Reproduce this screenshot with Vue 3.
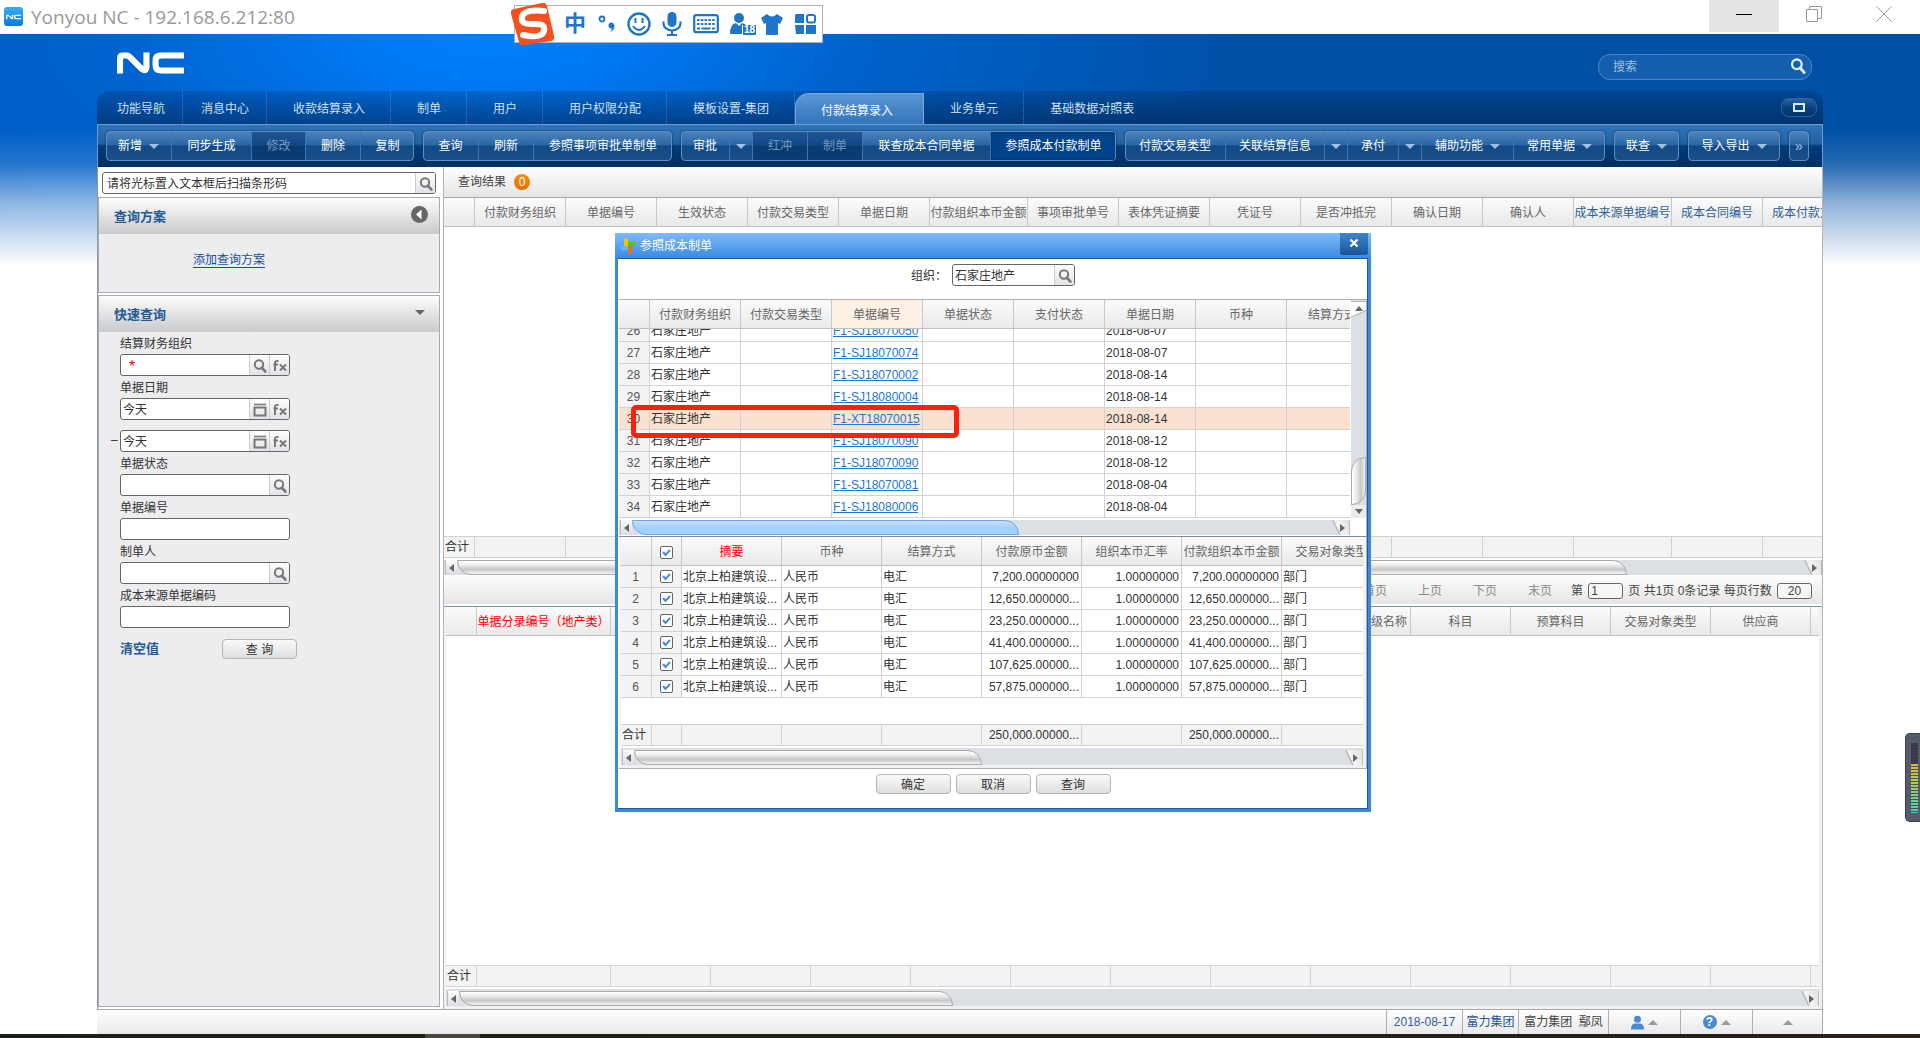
<script setup>
import { ref } from 'vue'

const tabs = ref([
  { label: '功能导航', home: true },
  { label: '消息中心', home: true },
  { label: '收款结算录入' },
  { label: '制单' },
  { label: '用户' },
  { label: '用户权限分配' },
  { label: '模板设置-集团' },
  { label: '付款结算录入', active: true },
  { label: '业务单元' },
  { label: '基础数据对照表' },
])

const toolGroups = [
  [
    { label: '新增', w: 66, caret: true },
    { label: '同步生成', w: 80 },
    { label: '修改', w: 54, off: true },
    { label: '删除', w: 55 },
    { label: '复制', w: 53 },
  ],
  [
    { label: '查询', w: 56 },
    { label: '刷新', w: 55 },
    { label: '参照事项审批单制单', w: 138 },
  ],
  [
    { label: '审批', w: 49 },
    { label: '', w: 23, caret: true },
    { label: '红冲', w: 55, off: true },
    { label: '制单', w: 55, off: true },
    { label: '联查成本合同单据', w: 128 },
    { label: '参照成本付款制单', w: 125, on: true },
  ],
  [
    { label: '付款交易类型', w: 101 },
    { label: '关联结算信息', w: 99 },
    { label: '', w: 23, caret: true },
    { label: '承付', w: 51 },
    { label: '', w: 23, caret: true },
    { label: '辅助功能', w: 92, caret: true },
    { label: '常用单据', w: 91, caret: true },
  ],
  [{ label: '联查', w: 65, caret: true }],
  [{ label: '导入导出', w: 92, caret: true }],
]

const resultCols = [
  { t: '', w: 31 },
  { t: '付款财务组织', w: 91 },
  { t: '单据编号', w: 91 },
  { t: '生效状态', w: 91 },
  { t: '付款交易类型', w: 91 },
  { t: '单据日期', w: 91 },
  { t: '付款组织本币金额', w: 98 },
  { t: '事项审批单号', w: 91 },
  { t: '表体凭证摘要', w: 91 },
  { t: '凭证号', w: 91 },
  { t: '是否冲抵完', w: 91 },
  { t: '确认日期', w: 91 },
  { t: '确认人', w: 91 },
  { t: '成本来源单据编号', w: 98, c: 'blue' },
  { t: '成本合同编号', w: 91, c: 'blue' },
  { t: '成本付款方式', w: 91, c: 'blue' },
]

const entryCols = [
  { t: '', w: 31 },
  { t: '单据分录编号（地产类）', w: 134, c: 'red' },
  { t: '', w: 100 },
  { t: '', w: 100 },
  { t: '', w: 100 },
  { t: '', w: 100 },
  { t: '', w: 100 },
  { t: '', w: 100 },
  { t: '', w: 100 },
  { t: '级名称', w: 100, c: 'end' },
  { t: '科目', w: 100 },
  { t: '预算科目', w: 100 },
  { t: '交易对象类型', w: 100 },
  { t: '供应商', w: 100 },
  { t: '', w: 100 },
]

const billCols = [
  { t: '', w: 31 },
  { t: '付款财务组织', w: 91 },
  { t: '付款交易类型', w: 91 },
  { t: '单据编号', w: 91, c: 'sorted' },
  { t: '单据状态', w: 91 },
  { t: '支付状态', w: 91 },
  { t: '单据日期', w: 91 },
  { t: '币种', w: 91 },
  { t: '结算方式', w: 91 },
]

const bills = [
  [26, 'F1-SJ18070050', '2018-08-07'],
  [27, 'F1-SJ18070074', '2018-08-07'],
  [28, 'F1-SJ18070002', '2018-08-14'],
  [29, 'F1-SJ18080004', '2018-08-14'],
  [30, 'F1-XT18070015', '2018-08-14'],
  [31, 'F1-SJ18070090', '2018-08-12'],
  [32, 'F1-SJ18070090', '2018-08-12'],
  [33, 'F1-SJ18070081', '2018-08-04'],
  [34, 'F1-SJ18080006', '2018-08-04'],
]

const detailCols = [
  { t: '', w: 31 },
  { t: '', w: 30, check: true },
  { t: '摘要', w: 100, c: 'red' },
  { t: '币种', w: 100 },
  { t: '结算方式', w: 100 },
  { t: '付款原币金额', w: 100 },
  { t: '组织本币汇率', w: 100 },
  { t: '付款组织本币金额', w: 100 },
  { t: '交易对象类型', w: 100 },
]

const details = [
  '7,200.00000000',
  '12,650.000000...',
  '23,250.000000...',
  '41,400.000000...',
  '107,625.00000...',
  '57,875.000000...',
]
const total = '250,000.00000...'

const fields = ref([
  { id: 'org', label: '结算财务组织', value: '', star: true, btns: ['search', 'fx'] },
  { id: 'from', label: '单据日期', value: '今天', btns: ['cal', 'fx'] },
  { id: 'to', range: true, value: '今天', btns: ['cal', 'fx'] },
  { id: 'state', label: '单据状态', value: '', btns: ['search'] },
  { id: 'code', label: '单据编号', value: '', btns: [] },
  { id: 'maker', label: '制单人', value: '', btns: ['search'] },
  { id: 'source', label: '成本来源单据编码', value: '', btns: [] },
])

const names = { search: '选择', cal: '选择日期', fx: '公式' }
const sum = (cols) => cols.reduce((n, c) => n + c.w, 0)
</script>

<template>
  <svg class="defs" aria-hidden="true">
    <symbol id="i-search" viewBox="0 0 14 14">
      <circle cx="6" cy="5.5" r="4.2" fill="none" stroke="currentColor" stroke-width="2" />
      <path d="M8.8 8.6l3.6 4" stroke="currentColor" stroke-width="2.6" stroke-linecap="round" />
    </symbol>
    <symbol id="i-cal" viewBox="0 0 14 14">
      <path d="M1 1.500h12" stroke="currentColor" stroke-width="1.600" />
      <rect x="1.500" y="4.500" width="11" height="8" fill="none" stroke="currentColor" stroke-width="2" />
    </symbol>
    <symbol id="i-fx" viewBox="0 0 14 14">
      <path d="M2 12V4q0-2.500 3.500-2M.500 5.500h4.500M7 5.500l6 6M13 5.500l-6 6" fill="none" stroke="currentColor" stroke-width="2" />
    </symbol>
    <symbol id="i-nc" viewBox="0 0 66 21">
      <path d="M3 21V6q0-3 3-3h3q2 0 3.500 1.500L24 16q1.500 1.500 3 1.500T29 15V0" fill="none" stroke="currentColor" stroke-width="6" />
      <path d="M66 3H44q-6 0-6 5v5q0 5 6 5h22" fill="none" stroke="currentColor" stroke-width="6" />
    </symbol>
  </svg>

  <div class="page">
    <header class="titlebar">
      <span class="appicon"><svg viewBox="0 0 66 21"><use href="#i-nc" /></svg></span>
      <span class="apptitle">Yonyou NC - 192.168.6.212:80</span>
      <div class="winbtns">
        <button class="min" aria-label="最小化"><svg viewBox="0 0 16 16"><path d="M0 8.500h16" stroke="#000" /></svg></button>
        <button aria-label="还原"><svg viewBox="0 0 16 16"><path d="M.500 3.500h11v12H.500zM3.500 3.500v-3h12v12h-4" fill="none" stroke="#999" /></svg></button>
        <button aria-label="关闭"><svg viewBox="0 0 16 16"><path d="M.500.500l15 15M15.500.500l-15 15" stroke="#999" /></svg></button>
      </div>
    </header>

    <div class="ime">
      <svg class="sogou" viewBox="0 0 44 43">
        <path d="M3 6L31 0q4-1 5 3l7 30q1 4-3 5l-27 4q-4 1-5-3L0 11q-1-4 3-5z" fill="#f4511e" />
        <path d="M33 8Q13 6 11 14t12 7q12-1 10 7T12 32" fill="none" stroke="#fff" stroke-width="6" stroke-linecap="round" />
      </svg>
      <b class="zh">中</b>
      <svg class="punct" viewBox="0 0 18 22"><circle cx="4" cy="6" r="2.500" fill="none" stroke="#1f75c8" stroke-width="1.800" /><path d="M15 10a3 3 0 1 0-1 5.500q0 2-3 4 6-2 5.500-7z" fill="#1f75c8" /></svg>
      <svg class="i24" viewBox="0 0 24 24"><circle cx="12" cy="12" r="10.500" fill="none" stroke="#1f75c8" stroke-width="2.400" /><path d="M8.500 6v5M15.500 6v5M6 14q6 8 12 0" fill="none" stroke="#1f75c8" stroke-width="2" /></svg>
      <svg class="mic" viewBox="0 0 20 24"><rect x="5.500" y="0" width="9" height="15" rx="4.500" fill="#1f75c8" /><path d="M1.500 9.500v2a8.500 7 0 0 0 17 0v-2M10 19v4M5 23h10" fill="none" stroke="#1f75c8" stroke-width="2.200" /></svg>
      <svg class="kbd" viewBox="0 0 26 20"><rect x="1.200" y="1.200" width="23.600" height="17" rx="2" fill="none" stroke="#1f75c8" stroke-width="2.200" /><path d="M4 6h18M4 10h18" stroke="#1f75c8" stroke-width="2.200" stroke-dasharray="2.500 1.300" /><path d="M4 14.500h3M8.500 14.500h9M19 14.500h3" stroke="#1f75c8" stroke-width="2.200" /></svg>
      <span class="person">
        <svg viewBox="0 0 26 22"><circle cx="9" cy="5" r="5" fill="#1f75c8" /><path d="M0 21q0-10 6-11l3 3 3-3q6 1 6 11z" fill="#1f75c8" /></svg>
        <b>18</b>
      </span>
      <svg class="shirt" viewBox="0 0 22 21"><path d="M6 0q5 5 10 0l6 4-3 6-2-1v11q0 1-1 1H6q-1 0-1-1V9l-2 1-3-6z" fill="#1f75c8" /></svg>
      <svg class="grid4" viewBox="0 0 21 20"><path d="M1 0h8v9H0V1zM0 11h9v9H1zM11 11h10v9H11z" fill="#1f75c8" /><rect x="12" y="1" width="8" height="7.500" rx="2" fill="none" stroke="#1f75c8" stroke-width="2" /></svg>
    </div>

    <div class="stage">
      <div class="brand">
        <svg class="logo" viewBox="0 0 66 21" role="img" aria-label="NC"><use href="#i-nc" /></svg>
        <div class="topsearch">
          <input type="text" placeholder="搜索" aria-label="搜索" />
          <button aria-label="开始搜索"><svg><use href="#i-search" /></svg></button>
        </div>
      </div>

      <nav class="tabs">
        <a v-for="t in tabs" :key="t.label" href="#" :class="{ home: t.home, active: t.active }">{{ t.label }}</a>
        <button class="expand" aria-label="最大化"><i></i></button>
      </nav>

      <div class="toolbar">
        <div v-for="(g, gi) in toolGroups" :key="gi" class="tgroup">
          <button
            v-for="(b, bi) in g"
            :key="bi"
            :class="{ on: b.on }"
            :disabled="b.off"
            :style="{ width: b.w + 'px' }"
            :aria-label="b.label || '更多'"
          >
            <span v-if="b.label">{{ b.label }}</span><i v-if="b.caret" class="caret"></i>
          </button>
        </div>
        <div class="tgroup more"><button aria-label="展开">»</button></div>
      </div>

      <div class="body">
        <aside class="side">
          <div class="scan">
            <div class="field">
              <input type="text" value="请将光标置入文本框后扫描条形码" aria-label="条形码" />
              <button aria-label="查找"><svg><use href="#i-search" /></svg></button>
            </div>
          </div>
          <section class="panel">
            <h2>查询方案
              <button class="fold" aria-label="收起"><svg viewBox="0 0 17 17"><circle cx="8.500" cy="8.500" r="8.500" fill="#666" /><path d="M10.500 3.500v10L5 8.500z" fill="#fff" /></svg></button>
            </h2>
            <div class="plans"><a href="#">添加查询方案</a></div>
          </section>
          <section class="panel grow">
            <h2>快速查询<i class="caret dark"></i></h2>
            <form class="quick" @submit.prevent>
              <div v-for="f in fields" :key="f.id" class="row" :class="{ range: f.range }">
                <label :for="f.id">{{ f.label || '–' }}</label>
                <div class="field">
                  <span v-if="f.star" class="star">*</span>
                  <input :id="f.id" v-model="f.value" type="text" />
                  <button v-for="b in f.btns" :key="b" type="button" :aria-label="names[b]"><svg><use :href="'#i-' + b" /></svg></button>
                </div>
              </div>
              <div class="actions">
                <a href="#">清空值</a>
                <button class="btn" type="submit">查 询</button>
              </div>
            </form>
          </section>
        </aside>

        <main class="main">
          <div class="resultbar">查询结果<span class="badge">0</span></div>
          <div class="clip">
            <table class="grid" :style="{ width: sum(resultCols) + 'px' }">
              <colgroup><col v-for="(c, i) in resultCols" :key="i" :style="{ width: c.w + 'px' }" /></colgroup>
              <thead><tr><th v-for="(c, i) in resultCols" :key="i" :class="c.c">{{ c.t }}</th></tr></thead>
            </table>
          </div>
          <div class="void one"></div>
          <div class="clip">
            <table class="grid totals" :style="{ width: sum(resultCols) + 'px' }">
              <colgroup><col v-for="(c, i) in resultCols" :key="i" :style="{ width: c.w + 'px' }" /></colgroup>
              <tbody><tr><td v-for="(c, i) in resultCols" :key="i">{{ i ? '' : '合计' }}</td></tr></tbody>
            </table>
          </div>
          <div class="hbar"><i class="arr left"></i><i class="thumb t1"></i><i class="track"></i><i class="arr right"></i></div>
          <div class="pager">
            <a href="#">首页</a><a href="#">上页</a><a href="#">下页</a><a href="#">末页</a>
            <label>第 <input type="text" value="1" /></label>
            <label>页 共1页 0条记录 每页行数 <input class="size" type="text" value="20" /></label>
          </div>
          <div class="entries">
            <div class="clip">
              <table class="grid" :style="{ width: sum(entryCols) + 'px' }">
                <colgroup><col v-for="(c, i) in entryCols" :key="i" :style="{ width: c.w + 'px' }" /></colgroup>
                <thead><tr><th v-for="(c, i) in entryCols" :key="i" :class="c.c">{{ c.t }}</th></tr></thead>
              </table>
            </div>
            <div class="void"></div>
            <div class="clip">
              <table class="grid totals" :style="{ width: sum(entryCols) + 'px' }">
                <colgroup><col v-for="(c, i) in entryCols" :key="i" :style="{ width: c.w + 'px' }" /></colgroup>
                <tbody><tr><td v-for="(c, i) in entryCols" :key="i">{{ i ? '' : '合计' }}</td></tr></tbody>
              </table>
            </div>
            <div class="hbar low"><i class="arr left"></i><i class="thumb t2"></i><i class="track"></i><i class="arr right"></i></div>
          </div>
        </main>
      </div>

      <footer class="status">
        <span class="date">2018-08-17</span>
        <a class="corp" href="#">富力集团</a>
        <span class="who">富力集团&nbsp; 鄢凤</span>
        <button aria-label="用户"><svg viewBox="0 0 14 15"><circle cx="7" cy="4" r="3.800" fill="#4a8bd0" /><path d="M0 15q0-6 4-6.500h6q4 .500 4 6.500z" fill="#4a8bd0" /></svg><i class="up"></i></button>
        <button aria-label="帮助"><b class="help">?</b><i class="up"></i></button>
        <button aria-label="展开"><i class="up"></i></button>
      </footer>
    </div>

    <div class="taskbar"><i></i></div>

    <div class="dialog" role="dialog" aria-label="参照成本制单">
      <div class="dtitle">
        <svg viewBox="0 0 16 16"><path d="M4 1l4-1v8H4z" fill="#f5c400" /><path d="M8 4h6l2 2-2 2H8z" fill="#5cc400" /><path d="M8 8h4v7l-4 1z" fill="#f46a10" /><path d="M0 8h8v4H2z" fill="#4fc0ff" /></svg>
        <span>参照成本制单</span>
        <button aria-label="关闭"><svg viewBox="0 0 10 10"><path d="M1.500 1.500l7 7M8.500 1.500l-7 7" stroke="#fff" stroke-width="2.200" /></svg></button>
      </div>
      <div class="dbody">
        <div class="orgrow">
          <label for="dorg">组织：</label>
          <div class="field">
            <input id="dorg" type="text" value="石家庄地产" />
            <button aria-label="选择组织"><svg><use href="#i-search" /></svg></button>
          </div>
        </div>
        <div class="upper">
          <div class="bills">
            <table class="grid" :style="{ width: sum(billCols) + 'px' }">
              <colgroup><col v-for="(c, i) in billCols" :key="i" :style="{ width: c.w + 'px' }" /></colgroup>
              <thead><tr><th v-for="(c, i) in billCols" :key="i" :class="c.c">{{ c.t }}</th></tr></thead>
            </table>
            <div class="rows">
              <table class="grid" :style="{ width: sum(billCols) + 'px' }">
                <colgroup><col v-for="(c, i) in billCols" :key="i" :style="{ width: c.w + 'px' }" /></colgroup>
                <tbody>
                  <tr v-for="b in bills" :key="b[0]" :class="{ picked: b[0] === 30 }">
                    <td class="num">{{ b[0] }}</td><td>石家庄地产</td><td></td>
                    <td><a href="#">{{ b[1] }}</a></td><td></td><td></td><td>{{ b[2] }}</td><td></td><td></td>
                  </tr>
                </tbody>
              </table>
            </div>
            <div class="hbar blue"><i class="arr left"></i><i class="thumb t3"></i><i class="track"></i><i class="arr right"></i></div>
          </div>
          <div class="vbar"><i class="varr"></i><i class="vtrack"></i><i class="vthumb"></i><i class="varr down"></i></div>
        </div>
        <div class="lower">
          <div class="clip">
            <table class="grid" :style="{ width: sum(detailCols) + 'px' }">
              <colgroup><col v-for="(c, i) in detailCols" :key="i" :style="{ width: c.w + 'px' }" /></colgroup>
              <thead>
                <tr>
                  <th v-for="(c, i) in detailCols" :key="i" :class="c.c"><input v-if="c.check" type="checkbox" checked aria-label="全选" />{{ c.t }}</th>
                </tr>
              </thead>
              <tbody>
                <tr v-for="(d, i) in details" :key="i">
                  <td class="num">{{ i + 1 }}</td>
                  <td class="tick"><input type="checkbox" checked :aria-label="'第' + (i + 1) + '行'" /></td>
                  <td>北京上柏建筑设...</td><td>人民币</td><td>电汇</td>
                  <td class="amt">{{ d }}</td><td class="amt">1.00000000</td><td class="amt">{{ d }}</td><td>部门</td>
                </tr>
                <tr class="gap"><td colspan="9"></td></tr>
              </tbody>
              <tfoot>
                <tr><td>合计</td><td></td><td></td><td></td><td></td><td class="amt">{{ total }}</td><td></td><td class="amt">{{ total }}</td><td></td></tr>
              </tfoot>
            </table>
          </div>
          <div class="hbar low"><i class="arr left"></i><i class="thumb t4"></i><i class="track"></i><i class="arr right"></i></div>
        </div>
        <div class="dbtns">
          <button class="btn">确定</button><button class="btn">取消</button><button class="btn">查询</button>
        </div>
      </div>
      <div class="mark"></div>
    </div>

    <div class="meter"><i></i></div>
  </div>
</template>

<style>
body { background: #fff; }
</style>

<style scoped>
.page, .page * { box-sizing: border-box; }
.page {
  position: relative;
  min-height: 100vh;
  display: flex;
  flex-direction: column;
  overflow: hidden;
  font: 12px/16px "Liberation Sans", "Noto Sans CJK SC", sans-serif;
  color: #333;
}
.defs { position: absolute; width: 0; height: 0; }
button { font: inherit; color: inherit; border: 0; padding: 0; margin: 0; background: none; }
input { font: inherit; color: inherit; margin: 0; min-width: 0; }
a { color: inherit; text-decoration: none; }

/* window title */
.titlebar { height: 34px; display: flex; align-items: flex-start; background: #fff; }
.appicon { width: 19px; height: 19px; margin: 7px 8px 0 4px; border-radius: 3px; background: linear-gradient(#38aef5, #0a78dc); color: #fff; display: flex; align-items: center; justify-content: center; }
.appicon svg { width: 15px; height: 6px; }
.apptitle { font: 19px/34px "Open Sans", sans-serif; color: #999; }
.winbtns { margin-left: auto; display: flex; padding-right: 1px; }
.winbtns button { width: 70px; height: 32px; }
.winbtns .min { background: #e4e4e4; }
.winbtns svg { width: 16px; height: 16px; }

/* input method bar */
.ime { position: absolute; left: 514px; top: 5px; width: 309px; height: 38px; background: #fff; border: 1px solid #aab4be; display: flex; align-items: center; gap: 11px; color: #1f75c8; padding-right: 6px; }
.sogou { width: 44px; height: 43px; margin: 0 -2px 0 -4px; flex: none; }
.zh { font-size: 22px; line-height: 36px; }
.punct { width: 18px; height: 22px; margin-left: 1px; }
.i24 { width: 24px; height: 24px; }
.mic { width: 20px; height: 24px; }
.kbd { width: 26px; height: 20px; }
.person { display: flex; width: 26px; height: 22px; position: relative; }
.person b { position: absolute; right: 0; bottom: 0; background: #1f75c8; color: #fff; font-size: 10px; line-height: 10px; padding: 0 1px; border-left: 1px solid #fff; }
.shirt { width: 22px; height: 21px; margin-left: -6px; }
.grid4 { width: 21px; height: 20px; margin-left: auto; }

/* backdrop and frame */
.stage {
  flex: 1;
  display: flex;
  flex-direction: column;
  padding: 0 97px;
  background:
    linear-gradient(rgba(255, 255, 255, 0) 96px, rgba(255, 255, 255, .15) 130px, rgba(255, 255, 255, .55) 168px, #fff 232px),
    radial-gradient(ellipse 760px 300px at 490px 0, #0080ff 0, #0078f2 18%, rgba(0, 104, 216, .7) 50%, rgba(0, 80, 166, 0) 100%),
    linear-gradient(90deg, #0058bc, #0050a6 60%);
}
.brand { height: 57px; display: flex; justify-content: space-between; align-items: flex-start; padding: 18px 11px 0 20px; color: #fff; }
.logo { width: 67px; height: 22px; }
.topsearch { width: 214px; height: 26px; margin-top: 2px; display: flex; align-items: center; border: 1px solid #4a86c6; border-radius: 12px; background: #145fae; }
.topsearch input { flex: 1; border: 0; background: none; outline: none; padding: 0 0 0 14px; }
.topsearch input::placeholder { color: #9fc0e2; opacity: 1; }
.topsearch svg { width: 16px; height: 16px; margin: 2px 5px 0 0; color: #dfeaf6; }

.tabs { height: 33px; display: flex; border-radius: 12px 12px 0 0; background: linear-gradient(rgba(0, 20, 50, .18), rgba(0, 20, 50, .48)); color: #cfe0f2; }
.tabs a { padding: 0 25px 0 26px; line-height: 37px; border-right: 1px dotted rgba(120, 170, 225, .5); white-space: nowrap; }
.tabs a.home { padding: 0 17px 0 18px; }
.tabs a.home:first-child { padding-left: 20px; }
.tabs a.active { margin-top: 2px; line-height: 34px; color: #fff; padding: 0 30px 0 25px; background: linear-gradient(#5b97d6, #3374ba); border: 1px solid #7aaadc; border-bottom: 0; border-radius: 14px 0 0 0; }
.tabs a:nth-last-child(2) { border: 0; }
.expand { width: 36px; height: 19px; margin: 7px 6px 0 auto; border: 1px solid #2b629f; border-radius: 8px; background: linear-gradient(#2a62a2, #0a417f 50%, #003468); display: flex; align-items: center; justify-content: center; }
.expand i { width: 12px; height: 9px; border: 2px solid #dce9f7; }

.toolbar { height: 43px; display: flex; gap: 9px; padding: 6px 14px 0 8px; border: 1px solid #6a9cd0; border-width: 1px 1px 0; background: linear-gradient(#3274b9, #20609f 45%, #003d7a 50%, #002f62); }
.tgroup { display: flex; height: 30px; flex: none; border: 1px solid #5f8ebf; border-radius: 4px; overflow: hidden; box-shadow: 0 0 2px #002a58; background: linear-gradient(#4c82bb, #2b67a5 45%, #114a87 50%, #1a4f88); }
.tgroup button { color: #fff; display: flex; align-items: center; justify-content: center; gap: 7px; border-right: 1px solid #3f74ad; white-space: nowrap; }
.tgroup button:last-child { margin-right: -1px; border-right: 0; }
.tgroup button:first-child { margin-left: -1px; }
.tgroup button:disabled { color: #7797bd; background: linear-gradient(#1e5796, #104682 48%, #083a72 52%, #0c3f76); }
.tgroup button.on { background: #00438c; box-shadow: inset 0 0 3px #002b5c; }
.more { margin: 0 0 0 auto; }
.more button { width: 20px; color: #a9c6e4; font-size: 14px; }
.caret { width: 0; height: 0; border: 5px solid transparent; border-top-color: #a3bfdd; border-bottom: 0; }
.dark { border-top-color: #666; }

/* body columns */
.body { flex: 1; display: flex; gap: 3px; background: #fff; border-right: 1px solid #b4b4b6; border-left: 1px solid #8b98a6; }
.side { width: 342px; flex: none; display: flex; flex-direction: column; gap: 2px; }
.scan { height: 28px; padding: 5px 4px 0; }
.field { display: flex; height: 22px; border: 1px solid #666; border-radius: 3px; background: #fff; overflow: hidden; }
.field input { flex: 1; width: 0; border: 0; padding: 1px 3px 0 2px; outline: none; background: none; }
.scan .field input { padding-left: 4px; }
.field button { width: 20px; border-left: 1px solid #ccc; background: linear-gradient(#fdfdfd, #e2e3e7); color: #777; }
.field svg { width: 14px; height: 14px; display: block; margin: 2px auto 0; }
.star { color: #f00; width: 16px; padding: 3px 0 0 8px; font: 16px/17px "Liberation Sans", sans-serif; }
.panel { border: 1px solid #a8abb0; background: #ededf0; }
.panel.grow { flex: 1; margin-bottom: 2px; }
.panel h2 { margin: 0; height: 36px; display: flex; align-items: center; justify-content: space-between; padding: 1px 11px 0 15px; font-size: 13px; line-height: 18px; color: #245a94; background: linear-gradient(#fdfdfd, #c9cacc); }
.panel h2 .caret { margin: 0 3px 4px 0; }
.fold { width: 17px; height: 17px; margin: 0 0 5px; }
.fold svg { display: block; width: 17px; height: 17px; }
.plans { height: 58px; padding: 18px 58px 0 0; margin-left: -22px; text-align: center; }
.plans a { color: #15509c; border-bottom: 1px solid #15509c; }
.quick { padding: 0 21px; }
.row { width: 170px; }
.row label { display: block; height: 22px; line-height: 25px; }
.row.range { display: flex; margin: 10px 0 0 -9px; width: 179px; }
.row.range label { width: 9px; line-height: 20px; }
.row.range .field { flex: 1; }
.actions { display: flex; align-items: center; justify-content: space-between; width: 177px; margin-top: 11px; }
.actions a { font-weight: bold; font-size: 13px; color: #245a94; }
.btn { width: 75px; height: 20px; padding-top: 1px; border: 1px solid #b5b5b7; border-radius: 4px; background: linear-gradient(#fafafa, #dedede); }

.main { flex: 1; min-width: 0; display: flex; flex-direction: column; border-left: 1px solid #b4b4b6; }
.resultbar { height: 31px; display: flex; align-items: center; gap: 8px; padding-left: 14px; border-bottom: 1px solid #aaa; background: linear-gradient(#fefefe, #e5e5e5); color: #444; }
.badge { width: 16px; height: 16px; border-radius: 50%; text-align: center; color: #fff; background: linear-gradient(#f59310, #e36f00); }
.clip { overflow: hidden; }
.void { flex: 1 1 329px; background: #fff; }
.void.one { flex-basis: 309px; }

.grid { table-layout: fixed; border-collapse: separate; border-spacing: 0; }
.grid th { height: 29px; padding: 2px 0 0; font-weight: normal; color: #666; white-space: nowrap; overflow: hidden; border-right: 1px solid #c8c8c8; border-bottom: 1px solid #c0c0c0; background: linear-gradient(#fbfbfb, #e9e9e9); }
.grid th.blue { color: #2c5f9c; }
.grid th.red { color: #f00; }
.grid th.end { text-align: right; padding-right: 3px; }
.grid th.sorted { background: #fdf0e4; }
.grid td { height: 22px; padding: 0 2px 0 1px; white-space: nowrap; overflow: hidden; border-right: 1px solid #d2d2d2; border-bottom: 1px solid #d2d2d2; }
.totals td, .grid tfoot td { background: #f3f3f3; border-top: 1px solid #d2d2d2; }
.grid td.num { text-align: center; background: #f3f3f3; color: #555; }
.grid td.tick { text-align: center; background: #f3f3f3; }
.grid td.amt { text-align: right; }
.grid .picked td { background: #fae1d0; }
.grid td a { color: #1b78d8; text-decoration: underline; }
.grid .gap td { height: 26px; border: 0; }
.grid input { appearance: none; display: block; width: 13px; height: 13px; margin: 0 auto; border: 1px solid #666; border-radius: 2px; background: #fff url("data:image/svg+xml,%3Csvg xmlns='http://www.w3.org/2000/svg' viewBox='0 0 11 11'%3E%3Cpath d='M2 5l2.500 3L9 3' fill='none' stroke='%234a8bd8' stroke-width='2'/%3E%3C/svg%3E"); }

/* scroll bars */
.hbar { height: 18px; display: flex; padding: 2px 0 1px 1px; background: linear-gradient(#fff 2px, #dcdfe4 2px 17px, #fff 17px); }
.arr { flex: none; width: 12px; display: flex; align-items: center; justify-content: center; background: linear-gradient(#fcfcfc, #dcdcde); border-left: 1px solid #b8babd; }
.arr::before { content: ""; width: 0; height: 0; border-style: solid; border-color: transparent #666; border-width: 4px 5px 4px 0; }
.arr.right { width: 20px; border-left: 0; border-right: 1px solid #b8babd; background: linear-gradient(65deg, #dcdfe4 34%, #a9abae 37%, #f4f4f4 44%, #e2e2e4); padding-left: 6px; }
.arr.right::before { border-width: 4px 0 4px 5px; }
.thumb { border: 1px solid #a9abae; border-radius: 0 14px 0 14px; background: linear-gradient(#fff, #eee 30%, #c6c7c9 65%, #f4f4f4); }
.blue .thumb { border-color: #69a9ea; background: linear-gradient(#c4e1ff, #a5d0ff 50%, #a0d0ff); }
.track { flex: 1; }
.t1 { width: 85%; }
.t2 { width: 36%; }
.t3 { width: 53%; }
.t4 { width: 47%; }
.low { height: 22px; padding: 4px 0 3px 1px; background: linear-gradient(#fff 2px, #dcdfe4 2px 19px, #f0f0f2 19px); }

.pager { height: 31px; display: flex; align-items: center; justify-content: flex-end; padding: 0 10px 0 0; border-bottom: 1px solid #7d93ab; background: linear-gradient(#fdfdfd, #e5e5e5 28px, #fff 28px); color: #444; white-space: nowrap; }
.pager a { color: #888; margin-right: 31px; }
.pager a:nth-child(4) { margin-right: 19px; }
.pager label { margin-right: 5px; }
.pager label:last-child { margin: 0; }
.pager input { width: 35px; height: 16px; margin-left: 2px; border: 1px solid #666; border-radius: 3px; background: #f6f6f6; padding: 0 2px; vertical-align: middle; }
.pager .size { text-align: center; }
.entries { flex: 1 1 auto; display: flex; flex-direction: column; border: solid #f0f0f2; border-width: 0 3px 0 2px; min-width: 0; }

.status { height: 25px; display: flex; justify-content: flex-end; border: 1px solid #aaa; border-width: 1px 1px 0 0; background: linear-gradient(#fefefe, #e9e9ea); line-height: 24px; }
.status > * { border-left: 1px solid #b0b0b0; display: flex; align-items: center; justify-content: center; gap: 4px; }
.date { width: 76px; color: #2f5f94; }
.corp { width: 56px; color: #1f5590; }
.who { width: 90px; color: #444; }
.status button { width: 72px; }
.status button:last-child { width: 70px; }
.status svg { width: 13px; height: 15px; }
.help { width: 14px; height: 14px; border-radius: 50%; background: #4a8bd0; color: #fff; line-height: 14px; text-align: center; }
.up { border: 5px solid transparent; border-top: 0; border-bottom-color: #999; }
.taskbar { height: 4px; background: linear-gradient(90deg, #1c2117, #2a2115); padding-left: 425px; }
.taskbar i { display: block; width: 55px; height: 4px; background: #4c473b; }

/* dialog */
.dialog { position: absolute; left: calc(50% - 345px); top: 233px; width: 756px; border: 3px solid #3a88df; border-top: 0; background: #fff; }
.dtitle { height: 25px; display: flex; align-items: center; gap: 4px; margin: 0 -3px; padding-left: 5px; color: #fff; background: linear-gradient(#80bbfa, #3a89e2); }
.dtitle > svg { width: 16px; height: 16px; }
.dtitle button { width: 28px; height: 22px; margin: 0 3px 3px auto; border-radius: 0 0 3px 3px; background: linear-gradient(#3e86cd, #1a5496); }
.dtitle button svg { width: 10px; height: 10px; }
.dbody { border: 1px solid #1d5a9c; border-left: 0; padding-left: 1px; }
.orgrow { height: 40px; padding-top: 5px; display: flex; justify-content: center; gap: 5px; line-height: 24px; }
.orgrow .field { width: 123px; }
.upper { display: flex; gap: 1px; border: 1px solid #b0b0b0; border-width: 1px 1px 0 0; }
.bills { flex: 1; min-width: 0; overflow: hidden; }
.rows { height: 189px; display: flex; flex-direction: column; justify-content: flex-end; overflow: hidden; }
.rows .grid { flex: none; }
.vbar { width: 15px; height: 218px; padding-top: 1px; display: flex; flex-direction: column; background: #dcdfe4; }
.varr { height: 18px; flex: none; display: flex; justify-content: center; border-top: 1px solid #b8babd; background: linear-gradient(155deg, #fafafa 60%, #a9abae 64%, #dcdfe4 68%); }
.varr::before { content: ""; height: 0; margin-top: 4px; border: 4px solid transparent; border-top: 0; border-bottom: 5px solid #666; }
.varr.down { height: 13px; border: 0; background: #ececee; }
.varr.down::before { border-top: 5px solid #666; border-bottom: 0; }
.vtrack { flex: 1; }
.vthumb { height: 48px; border: 1px solid #a9abae; border-radius: 14px 0 14px 0; background: linear-gradient(90deg, #fff, #eee 30%, #c6c7c9 70%, #f4f4f4); }
.lower { border: 1px solid #b0b0b0; border-width: 1px 1px 1px 0; border-top-color: #7d8a98; padding: 0 3px 0 2px; background: #f3f3f4; }
.lower .clip { background: #fff; }
.dbtns { height: 39px; display: flex; justify-content: center; gap: 5px; padding-top: 5px; }
.mark { position: absolute; left: 13px; top: 172px; width: 328px; height: 33px; border: 5px solid #ff1f10; border-radius: 5px; pointer-events: none; }

.meter { position: absolute; right: 0; top: 733px; width: 15px; height: 89px; border-radius: 5px 0 0 5px; background: #565b6b; border: 1px solid #3c404c; border-right: 0; padding: 9px 2px 0 5px; }
.meter i { display: block; height: 70px; background: repeating-linear-gradient(rgba(50, 54, 66, 0) 0 2px, rgba(50, 54, 66, .8) 2px 3px), linear-gradient(#3b3f4b 30%, #e0b840 30%, #b8cc50 55%, #3fd0c0); }
</style>
